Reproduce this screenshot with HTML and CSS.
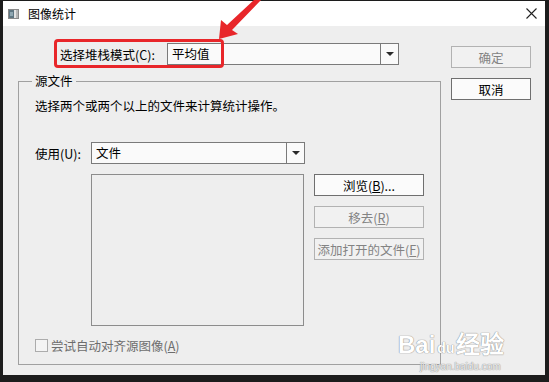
FILE: index.html
```html
<!DOCTYPE html>
<html lang="zh-CN">
<head>
    <meta charset="UTF-8">
    <title>图像统计</title>
    <link rel="stylesheet" href="styles.css">
</head>
<body>
    <div class="window">
        <div class="titlebar">
            <svg class="app-icon" width="11" height="10" viewBox="0 0 11 10">
                <rect x="0.5" y="0.5" width="10" height="9" fill="#e4e4e4" stroke="#8a8a8a"/>
                <rect x="1" y="1" width="5" height="8" fill="#5f7682"/>
                <rect x="2" y="3" width="3" height="4" fill="#8fa7b2"/>
                <rect x="8" y="1" width="2" height="8" fill="#b8b8b8"/>
            </svg>
            <span class="title">图像统计</span>
            <svg class="close" width="11" height="11" viewBox="0 0 11 11">
                <path d="M0.5 0.5 L10.5 10.5 M10.5 0.5 L0.5 10.5" stroke="#222" stroke-width="1.1" fill="none"/>
            </svg>
        </div>
        <div class="content">
            <div class="main">
                <div class="mode-row">
                    <span class="mode-label">选择堆栈模式(C):</span>
                    <div class="combo combo-mode">
                        <span class="combo-text">平均值</span>
                        <span class="combo-btn"><i class="caret"></i></span>
                    </div>
                </div>
                <fieldset class="group">
                    <legend>源文件</legend>
                    <p class="hint">选择两个或两个以上的文件来计算统计操作。</p>
                    <div class="use-row">
                        <span class="use-label">使用(U):</span>
                        <div class="combo combo-use">
                            <span class="combo-text">文件</span>
                            <span class="combo-btn"><i class="caret"></i></span>
                        </div>
                    </div>
                    <div class="files-row">
                        <div class="listbox"></div>
                        <div class="file-btns">
                            <button class="btn wide">浏览(<u>B</u>)...</button>
                            <button class="btn wide" disabled>移去(<u>R</u>)</button>
                            <button class="btn wide" disabled>添加打开的文件(<u>F</u>)</button>
                        </div>
                    </div>
                    <label class="check"><span class="box"></span>尝试自动对齐源图像(<u>A</u>)</label>
                </fieldset>
            </div>
            <div class="side">
                <button class="btn" disabled>确定</button>
                <button class="btn">取消</button>
            </div>
        </div>
    </div>

    <div class="highlight"></div>
    <svg class="arrow" width="55" height="45" viewBox="210 0 55 45">
        <polygon points="219,39 238,34 232,30 262,-1 255,-1 227,25 221,20" fill="#e8262a"/>
    </svg>

    <div class="watermark">
        <div class="wm-logo">Bai<span class="wm-du">du</span>经验</div>
        <div class="wm-url">jingyan.baidu.com</div>
    </div>
</body>
</html>
```

FILE: styles.css
```css
body {
    margin: 0;
    width: 549px;
    height: 382px;
    overflow: hidden;
    position: relative;
    background-color: #1c1c1c;
    font-family: "Noto Sans CJK SC", sans-serif;
    font-size: 12.5px;
    color: #000;
}

.window {
    margin: 1px 0 0 3px;
    width: 542px;
    height: 374px;
    background-color: #eeeeee;
    display: flex;
    flex-direction: column;
}

.titlebar {
    height: 25px;
    background-color: #fff;
    display: flex;
    align-items: center;
    padding: 0 8px 0 5px;
}

.app-icon {
    margin-right: 9px;
}

.title {
    font-size: 12px;
}

.close {
    margin-left: auto;
}

.content {
    flex: 1;
    display: flex;
}

.main {
    width: 438px;
    padding-left: 15px;
    box-sizing: border-box;
}

.mode-row {
    display: flex;
    align-items: center;
    margin-top: 17px;
    padding-left: 42px;
}

.mode-label {
    width: 107px;
}

.combo {
    display: flex;
    height: 22px;
    box-sizing: border-box;
    border: 1px solid #7a7a7a;
    background-color: #fafafa;
}

.combo-mode {
    width: 232px;
}

.combo-use {
    width: 214px;
}

.combo-text {
    flex: 1;
    padding-left: 4px;
    line-height: 20px;
}

.combo-btn {
    width: 17px;
    border-left: 1px solid #7a7a7a;
    display: flex;
    align-items: center;
    justify-content: center;
}

.caret {
    width: 0;
    height: 0;
    border-left: 4px solid transparent;
    border-right: 4px solid transparent;
    border-top: 4px solid #2a2a2a;
}

.group {
    margin: 8px 0 0;
    width: 423px;
    box-sizing: border-box;
    padding: 0 16px 10px;
    border: 1px solid #a0a0a0;
    min-width: 0;
}

.group legend {
    padding: 0 3px;
    margin-left: -3px;
    line-height: 16px;
}

.hint {
    margin: 8px 0 0;
    line-height: 17px;
}

.use-row {
    display: flex;
    align-items: center;
    margin-top: 28px;
}

.use-label {
    width: 56px;
}

.files-row {
    display: flex;
    margin-top: 10px;
    padding-left: 56px;
}

.listbox {
    width: 214px;
    height: 152px;
    box-sizing: border-box;
    border: 1px solid #8c8c8c;
}

.file-btns {
    display: flex;
    flex-direction: column;
    gap: 10px;
    margin-left: 10px;
}

.btn {
    width: 80px;
    height: 22px;
    padding: 0;
    font-family: inherit;
    font-size: 12.5px;
    color: #000;
    background-color: #fbfbfb;
    border: 1px solid #6f6f6f;
    border-radius: 0;
}

.btn.wide {
    width: 110px;
}

.btn:disabled {
    color: #838383;
    background-color: #f1f1f1;
    border-color: #b2b2b2;
}

.check {
    display: flex;
    align-items: center;
    margin-top: 11px;
    line-height: 17px;
    color: #6d6d6d;
}

.box {
    width: 13px;
    height: 13px;
    box-sizing: border-box;
    border: 1px solid #acacac;
    background-color: #f4f4f4;
    margin-right: 3px;
}

.side {
    display: flex;
    flex-direction: column;
    gap: 10px;
    margin-left: 10px;
    padding-top: 20px;
}

.highlight {
    position: absolute;
    left: 54px;
    top: 39px;
    width: 170px;
    height: 29px;
    box-sizing: border-box;
    border: 3px solid #e8262a;
    border-radius: 4px;
}

.arrow {
    position: absolute;
    left: 210px;
    top: 0;
}

.watermark {
    position: absolute;
    left: 398px;
    top: 332px;
    color: #ffffff;
    text-shadow: 0 0 1px #8a8a8a, 0 0 1px #8a8a8a;
    font-family: "Liberation Sans", sans-serif;
}

.wm-logo {
    font-size: 24px;
    font-weight: bold;
    line-height: 26px;
}

.wm-du {
    font-size: 14px;
    margin: 0 2px;
}

.wm-url {
    font-size: 10px;
    margin-left: 22px;
    color: rgba(255, 255, 255, 0.85);
}
```
